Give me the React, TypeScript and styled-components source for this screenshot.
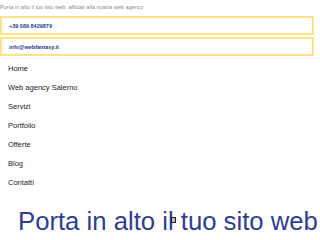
import React from 'react';
import styled, {createGlobalStyle} from "styled-components";

const GlobalStyle = createGlobalStyle`
    html, body {
        margin: 0;
        padding: 0;
        background: #ffffff;
        font-family: "Liberation Sans", Arial, sans-serif;
    }
`

const menu = ['Home', 'Web agency Salerno', 'Servizi', 'Portfolio', 'Offerte', 'Blog', 'Contatti'];

export default function App() {
    return (
        <Page>
            <GlobalStyle/>
            <Header>
                <Tagline>Porta in alto il tuo sito web, affidati alla nostra web agency</Tagline>
                <ContactBox>
                    <ContactText>+39 089 8429879</ContactText>
                </ContactBox>
                <ContactBox>
                    <ContactText>info@webfantasy.it</ContactText>
                </ContactBox>
            </Header>
            <Nav>
                {menu.map(item => (
                    <NavItem key={item}>{item}</NavItem>
                ))}
            </Nav>
            <Hero>
                <HeroTitle>
                    Porta in alto il tuo sito web
                    <Cursor/>
                </HeroTitle>
            </Hero>
        </Page>
    );
}

const Page = styled.div`
    width: 320px;
    height: 240px;
    overflow: hidden;
    display: flex;
    flex-direction: column;
`
const Header = styled.header`
    display: flex;
    flex-direction: column;
    gap: 2px;
    padding-top: 4px;
    padding-bottom: 1px;
    box-shadow: 0 2px 3px rgba(0, 0, 0, 0.03);
`
const Tagline = styled.div`
    font-size: 5.6px;
    line-height: 6px;
    color: #8a8a8a;
    margin-bottom: 4px;
    white-space: nowrap;
`
const ContactBox = styled.div`
    width: 314px;
    height: 19px;
    box-sizing: border-box;
    border: 2px solid #fde28c;
    display: flex;
    align-items: center;
    padding-left: 7px;
`
const ContactText = styled.span`
    font-size: 5.5px;
    font-weight: 700;
    color: #1f3b8c;
`
const Nav = styled.nav`
    display: flex;
    flex-direction: column;
    padding: 2px 0 0 8px;
`
const NavItem = styled.div`
    height: 19px;
    display: flex;
    align-items: center;
    font-size: 7.5px;
    color: #222222;
`
const Hero = styled.section`
    padding: 15px 0 0 18px;
`
const HeroTitle = styled.h1`
    position: relative;
    margin: 0;
    font-size: 25.7px;
    font-weight: 400;
    color: #2c3e94;
    white-space: nowrap;
`
const Cursor = styled.span`
    position: absolute;
    left: 153px;
    top: 10px;
    width: 3px;
    height: 4px;
    border: 1px solid #222;
    background: #bdbdbd;
`
